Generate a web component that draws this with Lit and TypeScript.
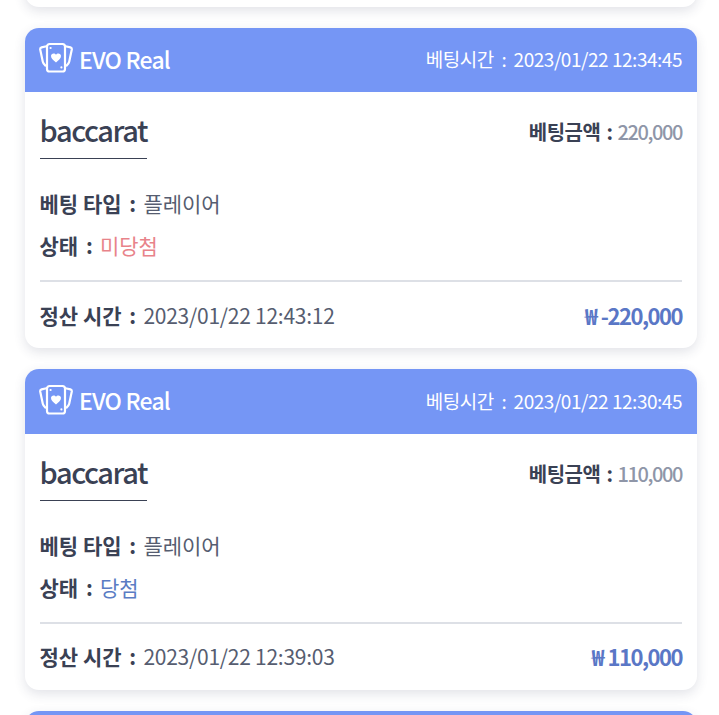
import { LitElement, css, html } from 'lit'
import { customElement } from 'lit/decorators.js'

interface Bet {
  betTime: string
  amount: string
  status: string
  lost: boolean
  settled: string
  payout: string
}

const BETS: Bet[] = [
  { betTime: '2023/01/22 12:34:45', amount: '220,000', status: '미당첨', lost: true, settled: '2023/01/22 12:43:12', payout: '-220,000' },
  { betTime: '2023/01/22 12:30:45', amount: '110,000', status: '당첨', lost: false, settled: '2023/01/22 12:39:03', payout: '110,000' }
]

const cardsIcon = html`
  <svg class="icon" viewBox="0 0 34 32" fill="none" stroke="#fff" stroke-width="2.2" stroke-linejoin="round" stroke-linecap="round">
    <path d="M7.5 4.2 2.6 5.4c-1 .3-1.5 1-1.4 2l2.6 12.4c.3 1.3.9 2.4 2.6 3.8" />
    <path d="M26.5 4.2l4.9 1.2c1 .3 1.5 1 1.4 2l-2.6 12.4c-.3 1.3-.9 2.4-2.6 3.8" />
    <rect x="8" y="2" width="18" height="27.5" rx="2.6" />
    <path fill="#fff" stroke="none" d="M17 20.5c-2.8-2.4-5-4-5-6.4 0-1.6 1.2-2.7 2.6-2.7 1 0 1.9.5 2.4 1.4.5-.9 1.4-1.4 2.4-1.4 1.4 0 2.6 1.1 2.6 2.7 0 2.4-2.2 4-5 6.4z" />
    <circle cx="11.6" cy="6" r="1.1" fill="#fff" stroke="none" />
    <circle cx="22.4" cy="25.4" r="1.1" fill="#fff" stroke="none" />
  </svg>
`

@customElement('app-root')
export class AppRoot extends LitElement {
  static styles = css`
    :host {
      display: block;
      height: 715px;
      overflow: hidden;
      background: #fff;
      font-family: "Noto Sans CJK KR", "Noto Sans", sans-serif;
      color: #3a4154;
    }
    .list {
      display: flex;
      flex-direction: column;
      gap: 21px;
      margin-top: -313.6px;
      padding: 0 22px 0 25px;
    }
    .card {
      height: 320.5px;
      flex: none;
      background: #fff;
      border-radius: 14px;
      overflow: hidden;
      box-shadow: 0 4px 12px rgba(50, 60, 90, 0.14);
      display: flex;
      flex-direction: column;
    }
    .head {
      height: 64.5px;
      box-sizing: border-box;
      flex: none;
      background: #7596f5;
      color: #fff;
      display: flex;
      align-items: center;
      justify-content: space-between;
      padding: 0 15px 3px 14px;
    }
    .brand {
      display: flex;
      align-items: center;
      gap: 6px;
      font-size: 23px;
      font-weight: 500;
      letter-spacing: -0.8px;
    }
    .icon {
      width: 34px;
      height: 32px;
      margin-top: -1px;
    }
    .bet-time {
      font-size: 19px;
      letter-spacing: -0.47px;
    }
    .bet-time .colon {
      margin: 0 3.5px 0 4px;
      font-weight: 400;
    }
    .colon {
      margin: 0 2.5px 0 3px;
      font-weight: 700;
    }
    .body {
      flex: 1;
      padding: 0 15px 0 14.5px;
      display: flex;
      flex-direction: column;
    }
    .game-row {
      display: flex;
      justify-content: space-between;
      align-items: flex-start;
      padding-top: 15px;
    }
    .game {
      font-size: 29px;
      line-height: 45px;
      font-weight: 500;
      letter-spacing: -1.4px;
      padding-bottom: 6px;
      border-bottom: 1px solid #3a4154;
    }
    .amount {
      margin-top: 11px;
      font-size: 20px;
      line-height: 27px;
      letter-spacing: -0.5px;
    }
    .amount .colon {
      margin: 0 1px 0 2px;
    }
    b {
      font-weight: 700;
    }
    .grey {
      color: #8f96a8;
      font-weight: 500;
      letter-spacing: -1.4px;
    }
    .info {
      margin-top: 29px;
      display: flex;
      flex-direction: column;
      gap: 12px;
      font-size: 21px;
      line-height: 30px;
    }
    .val {
      font-weight: 400;
      color: #565d70;
    }
    .lost {
      color: #e8838a;
    }
    .won {
      color: #5a7cc4;
    }
    .foot {
      margin-top: 20px;
      border-top: 2px solid #dde0e6;
      display: flex;
      justify-content: space-between;
      align-items: center;
      height: 65px;
      font-size: 21px;
    }
    .foot .val {
      letter-spacing: -0.25px;
    }
    .payout {
      font-size: 22px;
      font-weight: 700;
      color: #5a77c6;
      letter-spacing: -1.5px;
    }
    .won-sign {
      margin-right: 1px;
    }
  `

  private _renderCard (bet: Bet) {
    return html`
      <section class="card">
        <header class="head">
          <div class="brand">${cardsIcon}<span>EVO Real</span></div>
          <div class="bet-time">베팅시간 <span class="colon">:</span> ${bet.betTime}</div>
        </header>
        <div class="body">
          <div class="game-row">
            <div class="game">baccarat</div>
            <div class="amount"><b>베팅금액 <span class="colon">:</span></b> <span class="grey">${bet.amount}</span></div>
          </div>
          <div class="info">
            <div><b>베팅 타입 <span class="colon">:</span></b> <span class="val">플레이어</span></div>
            <div><b>상태 <span class="colon">:</span></b> <span class=${bet.lost ? 'lost' : 'won'}>${bet.status}</span></div>
          </div>
          <div class="foot">
            <div><b>정산 시간 <span class="colon">:</span></b> <span class="val">${bet.settled}</span></div>
            <div class="payout"><span class="won-sign">₩</span> ${bet.payout}</div>
          </div>
        </div>
      </section>
    `
  }

  render () {
    // first and last cards are only peeking in at the edges of the page
    return html`
      <div class="list">
        <section class="card"></section>
        ${BETS.map((bet) => this._renderCard(bet))}
        <section class="card"><header class="head"></header></section>
      </div>
    `
  }
}
